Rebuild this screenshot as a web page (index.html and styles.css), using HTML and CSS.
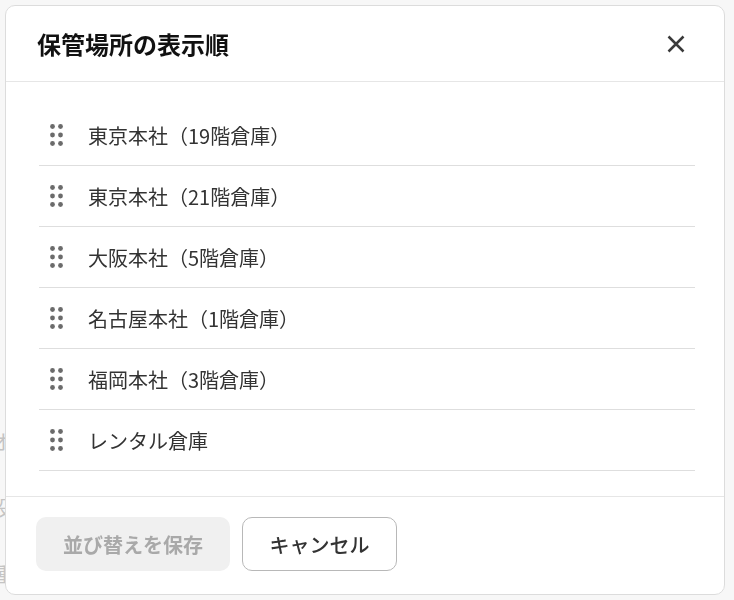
FILE: index.html
```html
<!DOCTYPE html>
<html lang="ja">
<head>
<meta charset="utf-8">
<title>保管場所の表示順</title>
<link rel="stylesheet" href="styles.css">
</head>
<body>
<div class="page">
  <div class="page-row">オプション</div>
  <div class="page-row">設定</div>
  <div class="page-row">種類</div>
</div>

<div class="modal" role="dialog" aria-labelledby="modal-title">
  <header class="modal-header">
    <h2 id="modal-title" class="modal-title">保管場所の表示順</h2>
    <button class="close-btn" aria-label="閉じる">
      <svg width="18" height="18" viewBox="0 0 18 18"><path d="M1.5 1.5 L16.5 16.5 M16.5 1.5 L1.5 16.5" stroke="#3a3a3a" stroke-width="2.5" stroke-linecap="butt" fill="none"/></svg>
    </button>
  </header>

  <div class="modal-body">
    <ul class="sort-list">
      <li class="sort-item"><svg class="handle" width="14" height="22" viewBox="0 0 14 22"><circle cx="2.5" cy="2.5" r="2.4"/><circle cx="10.5" cy="2.5" r="2.4"/><circle cx="2.5" cy="11" r="2.4"/><circle cx="10.5" cy="11" r="2.4"/><circle cx="2.5" cy="19.5" r="2.4"/><circle cx="10.5" cy="19.5" r="2.4"/></svg><span>東京本社（19階倉庫）</span></li>
      <li class="sort-item"><svg class="handle" width="14" height="22" viewBox="0 0 14 22"><circle cx="2.5" cy="2.5" r="2.4"/><circle cx="10.5" cy="2.5" r="2.4"/><circle cx="2.5" cy="11" r="2.4"/><circle cx="10.5" cy="11" r="2.4"/><circle cx="2.5" cy="19.5" r="2.4"/><circle cx="10.5" cy="19.5" r="2.4"/></svg><span>東京本社（21階倉庫）</span></li>
      <li class="sort-item"><svg class="handle" width="14" height="22" viewBox="0 0 14 22"><circle cx="2.5" cy="2.5" r="2.4"/><circle cx="10.5" cy="2.5" r="2.4"/><circle cx="2.5" cy="11" r="2.4"/><circle cx="10.5" cy="11" r="2.4"/><circle cx="2.5" cy="19.5" r="2.4"/><circle cx="10.5" cy="19.5" r="2.4"/></svg><span>大阪本社（5階倉庫）</span></li>
      <li class="sort-item"><svg class="handle" width="14" height="22" viewBox="0 0 14 22"><circle cx="2.5" cy="2.5" r="2.4"/><circle cx="10.5" cy="2.5" r="2.4"/><circle cx="2.5" cy="11" r="2.4"/><circle cx="10.5" cy="11" r="2.4"/><circle cx="2.5" cy="19.5" r="2.4"/><circle cx="10.5" cy="19.5" r="2.4"/></svg><span>名古屋本社（1階倉庫）</span></li>
      <li class="sort-item"><svg class="handle" width="14" height="22" viewBox="0 0 14 22"><circle cx="2.5" cy="2.5" r="2.4"/><circle cx="10.5" cy="2.5" r="2.4"/><circle cx="2.5" cy="11" r="2.4"/><circle cx="10.5" cy="11" r="2.4"/><circle cx="2.5" cy="19.5" r="2.4"/><circle cx="10.5" cy="19.5" r="2.4"/></svg><span>福岡本社（3階倉庫）</span></li>
      <li class="sort-item"><svg class="handle" width="14" height="22" viewBox="0 0 14 22"><circle cx="2.5" cy="2.5" r="2.4"/><circle cx="10.5" cy="2.5" r="2.4"/><circle cx="2.5" cy="11" r="2.4"/><circle cx="10.5" cy="11" r="2.4"/><circle cx="2.5" cy="19.5" r="2.4"/><circle cx="10.5" cy="19.5" r="2.4"/></svg><span>レンタル倉庫</span></li>
    </ul>
  </div>

  <footer class="modal-footer">
    <button class="btn btn-primary" disabled>並び替えを保存</button>
    <button class="btn btn-secondary">キャンセル</button>
  </footer>
</div>
</body>
</html>
```

FILE: styles.css
```css
* {
  box-sizing: border-box;
}

html, body {
  margin: 0;
  padding: 0;
  height: 100%;
}

body {
  background: #f7f7f7;
  font-family: "Noto Sans CJK JP", "Noto Sans", sans-serif;
  color: #333;
  overflow: hidden;
}

.page {
  padding-top: 424px;
  margin-left: -9px;
}

.page-row {
  height: 66px;
  line-height: 36px;
  font-size: 20px;
  color: #c4c4c4;
  white-space: nowrap;
}

.modal {
  position: fixed;
  left: 5px;
  top: 5px;
  width: 720px;
  height: 590px;
  background: #fff;
  border: 1px solid #dcdcdc;
  border-radius: 10px;
  display: flex;
  flex-direction: column;
  overflow: hidden;
}

.modal-header {
  height: 76px;
  flex: none;
  border-bottom: 1px solid #e6e6e6;
  display: flex;
  align-items: center;
  justify-content: space-between;
  padding: 0 33px 0 31px;
}

.modal-title {
  margin: 0;
  font-size: 24px;
  font-weight: 700;
  color: #111;
  line-height: 1;
}

.close-btn {
  width: 30px;
  height: 30px;
  border: none;
  background: transparent;
  padding: 0;
  display: flex;
  align-items: center;
  justify-content: center;
  cursor: pointer;
}

.modal-body {
  flex: 1;
  padding: 23px 29px 0 33px;
}

.sort-list {
  list-style: none;
  margin: 0;
  padding: 0;
}

.sort-item {
  height: 61px;
  border-bottom: 1px solid #dedede;
  display: flex;
  align-items: center;
  font-size: 20px;
  color: #333;
}

.handle {
  fill: #6b6b6b;
  margin-left: 11px;
  margin-right: 24px;
  flex: none;
}

.modal-footer {
  flex: none;
  border-top: 1px solid #e6e6e6;
  padding: 20px 30px 23px;
  display: flex;
  gap: 12px;
}

.btn {
  height: 54px;
  border-radius: 10px;
  font-family: inherit;
  font-size: 20px;
  padding: 0 26px;
  cursor: pointer;
}

.btn-primary {
  background: #f0f0f0;
  color: #a9a9a9;
  border: none;
  font-weight: 700;
  width: 194px;
}

.btn-secondary {
  background: #fff;
  color: #333;
  border: 1px solid #b8b8b8;
  font-weight: 500;
  width: 155px;
}
```
